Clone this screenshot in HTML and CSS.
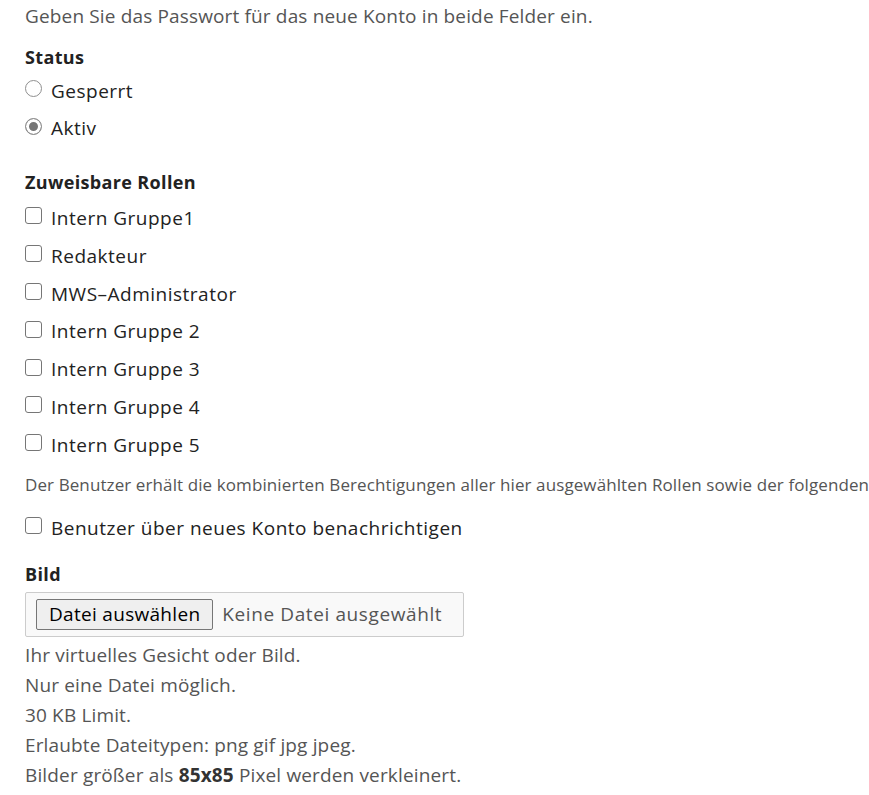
FILE: index.html
```html
<!DOCTYPE html>
<html lang="de">
<head>
    <meta charset="UTF-8">
    <meta name="viewport" content="width=device-width, initial-scale=1.0">
    <title>Benutzerkonto</title>
    <link rel="stylesheet" href="styles.css">
</head>
<body>
    <form class="konto-form">
        <p class="hinweis oben">Geben Sie das Passwort für das neue Konto in beide Felder ein.</p>

        <div class="feld status">
            <div class="feld-titel">Status</div>
            <label class="option"><input type="radio" name="status" value="0"> Gesperrt</label>
            <label class="option"><input type="radio" name="status" value="1" checked> Aktiv</label>
        </div>

        <div class="feld rollen">
            <div class="feld-titel">Zuweisbare Rollen</div>
            <label class="option"><input type="checkbox"> Intern Gruppe1</label>
            <label class="option"><input type="checkbox"> Redakteur</label>
            <label class="option"><input type="checkbox"> MWS–Administrator</label>
            <label class="option"><input type="checkbox"> Intern Gruppe 2</label>
            <label class="option"><input type="checkbox"> Intern Gruppe 3</label>
            <label class="option"><input type="checkbox"> Intern Gruppe 4</label>
            <label class="option"><input type="checkbox"> Intern Gruppe 5</label>
            <div class="klein">Der Benutzer erhält die kombinierten Berechtigungen aller hier ausgewählten Rollen sowie der folgenden</div>
        </div>

        <div class="feld benachrichtigen">
            <label class="option"><input type="checkbox"> Benutzer über neues Konto benachrichtigen</label>
        </div>

        <div class="feld bild">
            <div class="feld-titel">Bild</div>
            <div class="datei-box">
                <span class="datei-knopf">Datei auswählen</span>
                <span class="datei-name">Keine Datei ausgewählt</span>
            </div>
            <div class="hinweis liste">
                <div>Ihr virtuelles Gesicht oder Bild.</div>
                <div>Nur eine Datei möglich.</div>
                <div>30 KB Limit.</div>
                <div>Erlaubte Dateitypen: png gif jpg jpeg.</div>
                <div>Bilder größer als <strong>85x85</strong> Pixel werden verkleinert.</div>
            </div>
        </div>
    </form>
</body>
</html>
```

FILE: styles.css
```css
body {
    font-family: 'Open Sans', sans-serif;
    margin: 0;
    padding: 1px 0 0 25px;
    background: white;
    color: #222;
    overflow: hidden;
}
.konto-form {
    white-space: nowrap;
}
.hinweis {
    color: #555;
    font-size: 19px;
    letter-spacing: 0.15px;
    margin: 0;
}
.oben {
    line-height: 30px;
}
.feld-titel {
    font-weight: 700;
    font-size: 18px;
    letter-spacing: 0.35px;
    line-height: 28px;
    color: #222;
}
.status {
    margin-top: 12px;
}
.rollen {
    margin-top: 21px;
}
.rollen .feld-titel {
    margin-bottom: 3px;
}
.option {
    display: flex;
    align-items: center;
    gap: 9px;
    font-size: 19px;
    letter-spacing: 0.5px;
    line-height: 37.8px;
    height: 37.8px;
    padding-top: 3px;
    box-sizing: border-box;
}
.option input {
    appearance: none;
    margin: 0;
    width: 17px;
    height: 17px;
    border: 1px solid #767676;
    background: white;
    flex-shrink: 0;
    position: relative;
    top: -3px;
}
.option input[type="radio"] {
    border-radius: 50%;
    border-color: #8f8f8f;
}
.option input[type="radio"]:checked {
    background: #777;
    box-shadow: inset 0 0 0 3px white;
}
.option input[type="checkbox"] {
    border-radius: 3px;
}
.klein {
    color: #555;
    font-size: 17px;
    letter-spacing: 0.1px;
    line-height: 20px;
    margin-top: 12px;
}
.benachrichtigen {
    margin-top: 13px;
}
.bild {
    margin-top: 14px;
}
.datei-box {
    margin-top: 4px;
    width: 439px;
    height: 45px;
    box-sizing: border-box;
    border: 1px solid #ccc;
    border-radius: 2px;
    background: #f9f9f9;
    padding: 6px 10px;
    display: flex;
    align-items: center;
    gap: 9px;
}
.datei-knopf {
    box-sizing: border-box;
    height: 31px;
    padding: 0 12px;
    border: 1px solid #767676;
    border-radius: 2px;
    background: #efefef;
    color: #000;
    font-size: 19px;
    letter-spacing: 0.3px;
    line-height: 29px;
}
.datei-name {
    color: #555;
    font-size: 19px;
    letter-spacing: 0.6px;
}
.liste {
    margin-top: 3px;
    line-height: 30px;
}
.liste strong {
    font-weight: 700;
    color: #333;
}
```
